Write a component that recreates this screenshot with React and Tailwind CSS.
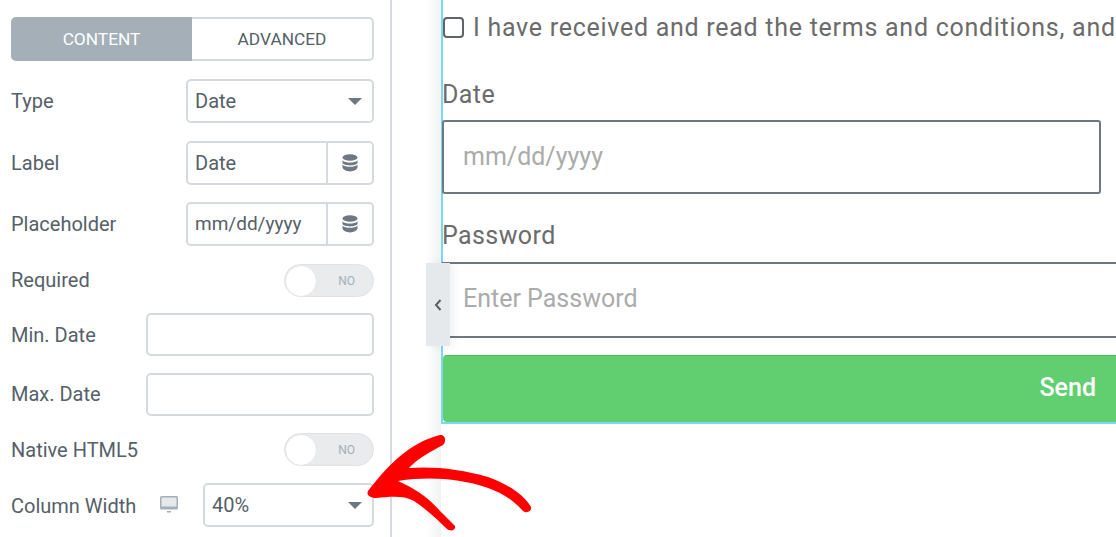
import React from 'react';

const border = 'border-2 border-[#d5dadf] rounded-[5px] bg-white';

function Caret() {
  return <span className="w-0 h-0 border-x-[7px] border-x-transparent border-t-[7px] border-t-[#6d7882]" />;
}

function DbIcon() {
  return (
    <svg width="16" height="18" viewBox="0 0 16 18" fill="#6d7882">
      <ellipse cx="8" cy="3.5" rx="7.5" ry="3.2" />
      <path d="M.5 6.2C2 8 5 8.6 8 8.6s6-.6 7.5-2.4v2.6C15 10.6 11.5 11.4 8 11.4S1 10.6.5 8.8z" />
      <path d="M.5 10.4C2 12.2 5 12.8 8 12.8s6-.6 7.5-2.4v3.2C15 16 11.5 17.4 8 17.4S1 16 .5 13.6z" />
    </svg>
  );
}

function MonitorIcon() {
  return (
    <svg width="18" height="18" viewBox="0 0 18 18" className="block -translate-x-px">
      <path d="M1.5 0h15A1.5 1.5 0 0 1 18 1.5V12a1.5 1.5 0 0 1-1.5 1.5h-15A1.5 1.5 0 0 1 0 12V1.5A1.5 1.5 0 0 1 1.5 0z" fill="#a4afb7" />
      <rect x="1.5" y="1.5" width="15" height="9" fill="#e6e9ec" />
      <rect x="7" y="15" width="4" height="1.5" fill="#a4afb7" />
    </svg>
  );
}

function Select({ value, className }) {
  return (
    <div className={`${border} h-[44px] flex items-center justify-between pl-[7px] pr-[10px] ${className}`}>
      <span>{value}</span>
      <Caret />
    </div>
  );
}

function DynamicInput({ value, small }) {
  return (
    <div className={`${border} w-[188px] h-[44px] flex items-center`}>
      <span className={`flex-1 pl-[7px] ${small ? 'text-[19px]' : ''}`}>{value}</span>
      <span className="w-[46px] h-full border-l-2 border-[#d5dadf] flex items-center justify-center">
        <DbIcon />
      </span>
    </div>
  );
}

function Toggle() {
  return (
    <div className="w-[90px] h-[33px] rounded-full bg-[#e9ebed] border border-[#dfe2e5] flex items-center justify-between pr-[18px]">
      <span className="w-[32px] h-[32px] rounded-full bg-white border border-[#e4e6e8]" />
      <span className="text-[12px] text-[#a4afb7]">NO</span>
    </div>
  );
}

function Row({ label, className, labelClass = '', children }) {
  return (
    <div className={`flex items-center justify-between ${className}`}>
      <span className={labelClass}>{label}</span>
      {children}
    </div>
  );
}

function Panel() {
  return (
    <div className="w-[392px] h-full shrink-0 border-r-2 border-[#d5dadf] pl-[11px] pr-[16px] pt-[17px] text-[20px] text-[#556068]">
      <div className="flex h-[44px] text-[17.3px]">
        <div className="w-[181px] pt-[2px] bg-[#a4afb7] text-white rounded-l-[5px] flex items-center justify-center">CONTENT</div>
        <div className="flex-1 pt-[2px] border-2 border-l-0 border-[#d5dadf] rounded-r-[5px] flex items-center justify-center">ADVANCED</div>
      </div>
      <Row label="Type" className="mt-[18px]"><Select value="Date" className="w-[188px]" /></Row>
      <Row label="Label" className="mt-[18px]"><DynamicInput value="Date" /></Row>
      <Row label="Placeholder" className="mt-[17px]"><DynamicInput value="mm/dd/yyyy" small /></Row>
      <Row label="Required" labelClass="pb-[2px]" className="mt-[18px]"><Toggle /></Row>
      <Row label="Min. Date" className="mt-[16px]"><div className={`${border} w-[228px] h-[43px]`} /></Row>
      <Row label="Max. Date" labelClass="pb-[2px]" className="mt-[17px]"><div className={`${border} w-[228px] h-[43px]`} /></Row>
      <Row label="Native HTML5" className="mt-[17px]"><Toggle /></Row>
      <Row label="Column Width" labelClass="pt-[2px]" className="mt-[17px]">
        <MonitorIcon />
        <Select value="40%" className="w-[171px]" />
      </Row>
    </div>
  );
}

function Preview() {
  return (
    <div className="ml-[49px] w-[700px] shrink-0 h-[424px] border-l-2 border-b-2 border-[#7fd6f2] text-[25px] text-[#6b6b6b]">
      <div className="-ml-px">
        <div className="flex items-center h-[55px] whitespace-nowrap">
          <span className="w-[21px] h-[21px] ml-px mr-[9px] shrink-0 rounded-[4px] border-2 border-[#5f6468] bg-white" />
          <span className="tracking-[0.73px]">I have received and read the terms and conditions, and</span>
        </div>
        <div className="h-[65px] flex items-end pb-[7px] tracking-[0.4px]">Date</div>
        <div className="w-[659px] h-[74px] border-2 border-[#6d7882] rounded-[3px] flex items-center pl-[19px] text-[#ababab]">mm/dd/yyyy</div>
        <div className="h-[68px] flex items-end pb-[8px] tracking-[0.4px]">Password</div>
        <div className="h-[76px] border-y-2 border-[#6d7882] flex items-center pl-[21px] pb-[3px] text-[#ababab]">Enter Password</div>
        <div className="mt-[17px] ml-px h-[67px] pb-[3px] rounded-[4px] bg-[#61ce70] border-t border-[#4fbd5f] text-white font-medium flex items-center justify-end pr-[45px]">Send</div>
      </div>
    </div>
  );
}

function Arrow() {
  return (
    <svg className="absolute left-0 top-0 pointer-events-none" width="1116" height="537" viewBox="0 0 1116 537" fill="#ff0000">
      <path d="M368 491C378 478 392 461 408 450C418 443 428 438 440 435C445 434 447 441 443 445C430 452 418 458 409 468C432 466 462 469 488 477C508 484 524 495 531 507C532 511 527 514 523 511C513 500 503 493 485 487C460 479 430 476 398 481C414 488 428 497 440 511C446 517 451 522 455 526C456 530 451 532 447 529C438 520 426 509 414 501C403 495 390 497 376 498C370 498 366 495 368 491Z" />
    </svg>
  );
}

export default function App() {
  return (
    <div className="relative w-[1116px] h-[537px] overflow-hidden bg-white flex font-['Roboto',sans-serif]">
      <Panel />
      <div className="absolute left-[426px] top-0 w-[15px] h-full bg-gradient-to-l from-[#f1f2f3] to-white" />
      <div className="relative"><Preview /></div>
      <div className="absolute left-[426px] top-[263px] w-[24px] h-[83px] bg-[#e6e9ec] shadow-[4px_0_10px_rgba(0,0,0,0.06)] flex items-center justify-center">
        <svg width="8" height="12" viewBox="0 0 8 12" fill="none" stroke="#556068" strokeWidth="2"><path d="M6.5 1 2 6l4.5 5" /></svg>
      </div>
      <Arrow />
    </div>
  );
}
